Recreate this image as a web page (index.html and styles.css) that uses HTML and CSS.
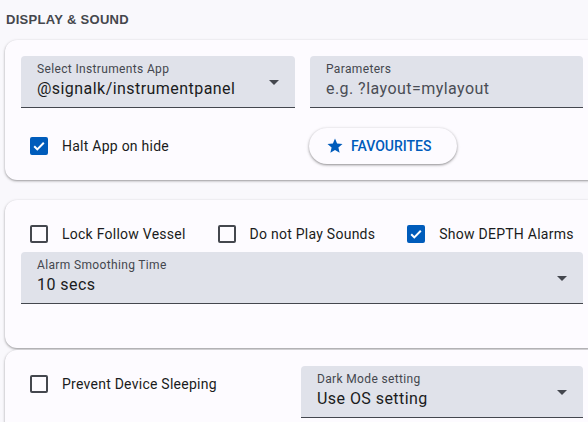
FILE: index.html
```html
<!DOCTYPE html>
<html>
<head>
<meta charset="utf-8">
<link rel="stylesheet" href="styles.css">
</head>
<body>
<div class="page">
  <h2 class="section-title">DISPLAY &amp; SOUND</h2>

  <div class="card card-apps">
    <div class="field-row">
      <div class="field field-select">
        <div class="field-label">Select Instruments App</div>
        <div class="field-value">@signalk/instrumentpanel</div>
        <span class="arrow"></span>
      </div>
      <div class="field">
        <div class="field-label">Parameters</div>
        <div class="field-value placeholder">e.g. ?layout=mylayout</div>
      </div>
    </div>
    <div class="field-row action-row">
      <label class="check">
        <span class="box checked"><svg viewBox="0 0 18 18" width="18" height="18"><path d="M4.2 9.3l3.1 3.1 6.5-6.6" fill="none" stroke="#fff" stroke-width="2"/></svg></span>
        <span class="check-label">Halt App on hide</span>
      </label>
      <div class="btn-cell">
        <button class="pill-btn">
          <svg viewBox="0 0 24 24" width="18" height="18"><path d="M12 17.27L18.18 21l-1.64-7.03L22 9.24l-7.19-.61L12 2 9.19 8.63 2 9.24l5.46 4.73L5.82 21z" fill="#005cbb"/></svg>
          <span>FAVOURITES</span>
        </button>
      </div>
    </div>
  </div>

  <div class="card card-alarms">
    <div class="check-row">
      <label class="check">
        <span class="box"></span>
        <span class="check-label">Lock Follow Vessel</span>
      </label>
      <label class="check">
        <span class="box"></span>
        <span class="check-label">Do not Play Sounds</span>
      </label>
      <label class="check">
        <span class="box checked"><svg viewBox="0 0 18 18" width="18" height="18"><path d="M4.2 9.3l3.1 3.1 6.5-6.6" fill="none" stroke="#fff" stroke-width="2"/></svg></span>
        <span class="check-label">Show DEPTH Alarms</span>
      </label>
    </div>
    <div class="field field-select">
      <div class="field-label">Alarm Smoothing Time</div>
      <div class="field-value">10 secs</div>
      <span class="arrow"></span>
    </div>
  </div>

  <div class="card card-device">
    <div class="device-row">
      <label class="check device-check">
        <span class="box"></span>
        <span class="check-label">Prevent Device Sleeping</span>
      </label>
      <div class="field field-select dark-field">
        <div class="field-label">Dark Mode setting</div>
        <div class="field-value">Use OS setting</div>
        <span class="arrow"></span>
      </div>
    </div>
  </div>
</div>
</body>
</html>
```

FILE: styles.css
```css
html, body {
  margin: 0;
  padding: 0;
  background: #f9f8fc;
  overflow: hidden;
}
body {
  font-family: Roboto, "Noto Sans", sans-serif;
  color: #1a1b20;
}
.page {
  padding: 0 0 0 5px;
  width: 594px;
}
.section-title {
  margin: 0;
  padding: 12px 0 0 1px;
  height: 28px;
  box-sizing: border-box;
  font-family: "Liberation Sans", Arial, sans-serif;
  font-size: 13px;
  font-weight: bold;
  color: #45474d;
  letter-spacing: 0.3px;
}
.card {
  background: #fdfbff;
  border-radius: 12px;
  box-shadow: 0 1px 2px rgba(0,0,0,0.3), 0 1px 3px 1px rgba(0,0,0,0.08);
  padding: 16px 16px 0 16px;
  box-sizing: border-box;
}
.card-apps {
  margin-top: 12px;
  height: 140px;
}
.card-alarms {
  margin-top: 20px;
  height: 148px;
  padding-top: 16px;
}
.card-device {
  margin-top: 2px;
  height: 90px;
}
.field-row {
  display: grid;
  grid-template-columns: 274px 273px;
  column-gap: 15px;
}
.field {
  position: relative;
  height: 52px;
  background: #e0e2ea;
  border-radius: 4px 4px 0 0;
  border-bottom: 1px solid #44474e;
  box-sizing: border-box;
  padding: 6px 16px 0 16px;
}
.field-label {
  font-size: 12px;
  color: #44474e;
  line-height: 14px;
  letter-spacing: 0.35px;
}
.field-value {
  font-size: 16px;
  line-height: 24px;
  margin-top: 1px;
  letter-spacing: 0.45px;
  color: #1a1b20;
}
.placeholder {
  color: #4a4d55;
}
.arrow {
  position: absolute;
  right: 16px;
  top: 24px;
  width: 0;
  height: 0;
  border-left: 5px solid transparent;
  border-right: 5px solid transparent;
  border-top: 5px solid #44474e;
}
.action-row {
  margin-top: 20px;
  align-items: center;
}
.check {
  display: flex;
  align-items: center;
  height: 36px;
}
.box {
  width: 18px;
  height: 18px;
  box-sizing: border-box;
  border: 2px solid #44474e;
  border-radius: 2px;
  margin-left: 9px;
  flex: none;
  display: flex;
}
.box.checked {
  background: #005cbb;
  border-color: #005cbb;
}
.box.checked svg {
  margin: -2px;
}
.check-label {
  margin-left: 14px;
  font-size: 14px;
  letter-spacing: 0.25px;
  color: #1a1b20;
}
.btn-cell {
  display: flex;
  margin-left: -1px;
}
.pill-btn {
  display: flex;
  align-items: center;
  height: 36px;
  width: 148px;
  padding: 0 0 0 17px;
  border: none;
  border-radius: 18px;
  background: #fdfbff;
  box-shadow: 0 1px 2px rgba(0,0,0,0.3), 0 1px 3px 1px rgba(0,0,0,0.12);
  font-family: Roboto, sans-serif;
  font-size: 14px;
  font-weight: 500;
  color: #005cbb;
  letter-spacing: 0;
}
.pill-btn svg {
  margin-right: 7px;
}
.check-row {
  display: flex;
  gap: 23px;
  height: 36px;
}
.device-row {
  display: flex;
  align-items: flex-start;
}
.device-check {
  width: 280px;
  margin-top: 0;
  height: 36px;
}
.dark-field {
  width: 282px;
}
```
